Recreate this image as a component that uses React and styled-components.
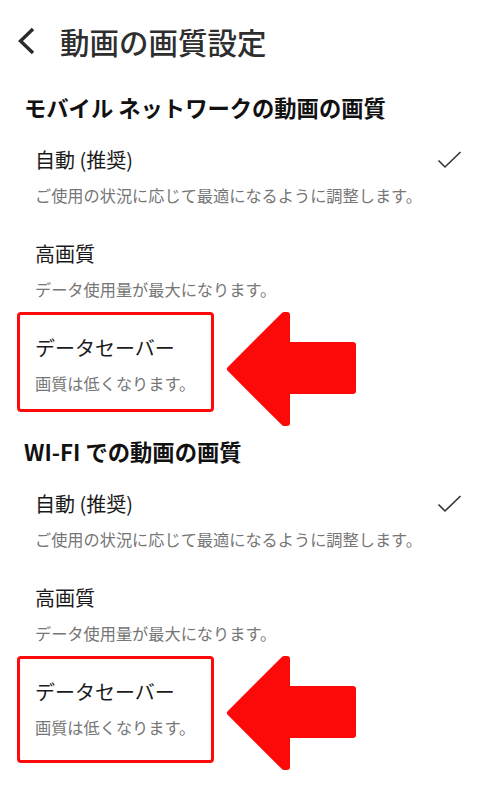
import React from 'react'
import styled, { createGlobalStyle } from 'styled-components'

const GlobalStyle = createGlobalStyle`
  body {
    margin: 0;
    background: #fff;
    font-family: "Noto Sans CJK JP", "Noto Sans", sans-serif;
  }
`

const sections = [
  { title: 'モバイル ネットワークの動画の画質', bottom: 16 },
  { title: 'WI-FI での動画の画質', bottom: 23 },
]

const options = [
  { label: '自動 (推奨)', desc: 'ご使用の状況に応じて最適になるように調整します。', checked: true },
  { label: '高画質', desc: 'データ使用量が最大になります。' },
]

function BackIcon() {
  return (
    <svg width="24" height="40" viewBox="0 0 24 40">
      <path d="M21 8 L8.5 20 L21 32" fill="none" stroke="#2a2a2a" strokeWidth="3.4" />
    </svg>
  )
}

function CheckIcon() {
  return (
    <svg width="25" height="18" viewBox="0 0 25 18">
      <path d="M1.5 9.5 L8 16 L23.5 1" fill="none" stroke="#333" strokeWidth="1.6" />
    </svg>
  )
}

function ArrowIcon() {
  return (
    <svg width="131" height="114" viewBox="0 0 131 114">
      <path
        d="M4 57 L58 3 L61 3 L61 33 L127 33 L127 79 L61 79 L61 111 L58 111 Z"
        fill="#fc0a0a"
        stroke="#fc0a0a"
        strokeWidth="6"
        strokeLinejoin="round"
      />
    </svg>
  )
}

function Option({ label, desc, checked }) {
  return (
    <OptionRow>
      <OptionText>
        <OptionLabel>{label}</OptionLabel>
        <OptionDesc>{desc}</OptionDesc>
      </OptionText>
      {checked ? (
        <Check>
          <CheckIcon />
        </Check>
      ) : null}
    </OptionRow>
  )
}

function Section({ title, bottom }) {
  return (
    <SectionBlock>
      <SectionTitle>{title}</SectionTitle>
      {options.map((o) => (
        <Option key={o.label} {...o} />
      ))}
      <Highlight>
        <Box $bottom={bottom}>
          <OptionLabel>データセーバー</OptionLabel>
          <OptionDesc>画質は低くなります。</OptionDesc>
        </Box>
        <Pointer>
          <ArrowIcon />
        </Pointer>
      </Highlight>
    </SectionBlock>
  )
}

export default function App() {
  return (
    <Page>
      <GlobalStyle />
      <Header>
        <BackIcon />
        <Title>動画の画質設定</Title>
      </Header>
      {sections.map((s) => (
        <Section key={s.title} {...s} />
      ))}
    </Page>
  )
}

const Page = styled.div`
  width: 500px;
  min-height: 802px;
  background: #fff;
  color: #1a1a1a;
`

const Header = styled.header`
  display: flex;
  align-items: center;
  height: 40px;
  padding: 21px 0 0 12px;
`

const Title = styled.h1`
  margin: 0 0 0 24px;
  font-size: 29.5px;
  line-height: 40px;
  font-weight: 500;
  color: #2e2e2e;
`

const SectionBlock = styled.section`
  display: flex;
  flex-direction: column;
  margin-top: 31px;

  & + & {
    margin-top: 24px;
  }
`

const SectionTitle = styled.h2`
  margin: 0 0 2px;
  padding-left: 24px;
  font-size: 22.3px;
  line-height: 30px;
  font-weight: 700;
  color: #111;
`

const OptionRow = styled.div`
  display: flex;
  align-items: flex-start;
  justify-content: space-between;
  padding: 24px 38px 13px 35px;
`

const OptionText = styled.div`
  display: flex;
  flex-direction: column;
  gap: 13px;
`

const OptionLabel = styled.div`
  font-size: 20px;
  line-height: 24px;
  color: #1a1a1a;
`

const OptionDesc = styled.div`
  font-size: 16.2px;
  line-height: 20px;
  color: #767676;
`

const Check = styled.div`
  display: flex;
  align-items: center;
  height: 24px;
`

const Highlight = styled.div`
  position: relative;
  width: 197px;
  margin-left: 17px;
`

const Box = styled.div`
  display: flex;
  flex-direction: column;
  gap: 13px;
  box-sizing: border-box;
  width: 197px;
  padding: 21px 0 ${({ $bottom }) => $bottom}px 15px;
  border: 3px solid #ff0a0a;
  border-radius: 4px;
`

const Pointer = styled.div`
  position: absolute;
  left: 209px;
  top: 0;
  line-height: 0;
`
